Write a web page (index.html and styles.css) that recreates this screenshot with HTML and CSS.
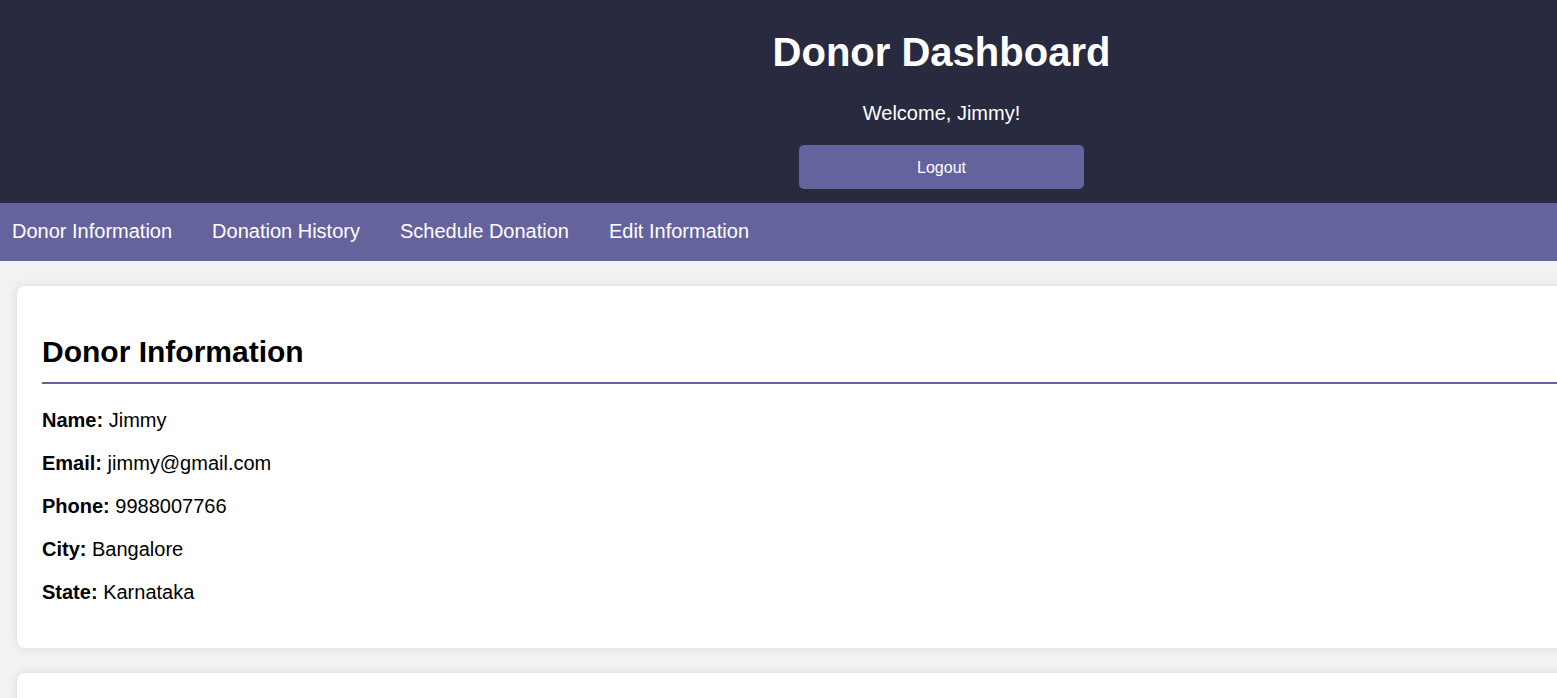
FILE: index.html
```html
<!DOCTYPE html>
<html lang="en">
<head>
<meta charset="utf-8">
<title>Donor Dashboard</title>
<link rel="stylesheet" href="styles.css">
</head>
<body>
<div class="page">
  <header class="header">
    <h1 class="title">Donor Dashboard</h1>
    <p class="welcome">Welcome, Jimmy!</p>
    <button class="logout">Logout</button>
  </header>
  <nav class="nav">
    <a class="nav-link" href="#info">Donor Information</a>
    <a class="nav-link" href="#history">Donation History</a>
    <a class="nav-link" href="#schedule">Schedule Donation</a>
    <a class="nav-link" href="#edit">Edit Information</a>
  </nav>
  <main class="main">
    <section class="card" id="info">
      <h2 class="card-title">Donor Information</h2>
      <p class="row"><strong>Name:</strong> Jimmy</p>
      <p class="row"><strong>Email:</strong> jimmy@gmail.com</p>
      <p class="row"><strong>Phone:</strong> 9988007766</p>
      <p class="row"><strong>City:</strong> Bangalore</p>
      <p class="row"><strong>State:</strong> Karnataka</p>
    </section>
    <section class="card" id="history">
      <h2 class="card-title">Donation History</h2>
      <p class="row">No donations yet.</p>
    </section>
  </main>
</div>
</body>
</html>
```
FILE: styles.css
```css
html, body {
  margin: 0;
  padding: 0;
}
body {
  background: #f2f2f2;
  font-family: "Liberation Sans", Arial, sans-serif;
  color: #000;
}
.page {
  width: 1883px;
}
.header {
  background: #282a40;
  color: #fff;
  display: flex;
  flex-direction: column;
  align-items: center;
  padding: 29px 0 14px;
}
.title {
  margin: 0;
  font-size: 40px;
  line-height: 46px;
  font-weight: bold;
}
.welcome {
  margin: 27px 0 0;
  font-size: 20px;
  line-height: 23px;
}
.logout {
  margin-top: 20px;
  width: 285px;
  height: 44px;
  border: none;
  border-radius: 5px;
  background: #65639e;
  color: #fff;
  font-family: "Liberation Sans", Arial, sans-serif;
  font-size: 16px;
  padding: 2px 0 0;
}
.nav {
  background: #65639e;
  height: 58px;
  display: flex;
  align-items: center;
  gap: 40px;
  padding-left: 12px;
}
.nav-link {
  color: #fff;
  text-decoration: none;
  font-size: 20px;
  line-height: 23px;
  margin-top: -1px;
}
.main {
  padding: 25px 17px 0;
}
.card {
  background: #fff;
  border-radius: 8px;
  box-shadow: 0 0 10px rgba(0, 0, 0, 0.1);
  padding: 25px 25px 24px;
  margin-bottom: 25px;
}
.card-title {
  margin: 24px 0 25px;
  padding-bottom: 12px;
  border-bottom: 2px solid #65639e;
  font-size: 30px;
  line-height: 34.5px;
  font-weight: bold;
}
.row {
  margin: 0 0 20px;
  font-size: 20px;
  line-height: 23px;
}
```
